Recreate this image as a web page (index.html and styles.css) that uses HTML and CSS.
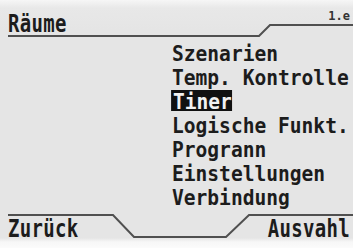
FILE: index.html
```html
<!DOCTYPE html>
<html lang="de">
<head>
<meta charset="utf-8">
<title>Räume</title>
<link rel="stylesheet" href="styles.css">
</head>
<body>
<div class="screen">
  <header class="head">
    <svg class="rule" width="353" height="38" viewBox="0 0 353 38"><path d="M8 36 H259 L270 25 H353" fill="none" stroke="#505050" stroke-width="2"/></svg>
    <div class="big title">Räume</div>
    <div class="ver">1.e</div>
  </header>
  <ul class="menu">
    <li>Szenarien</li>
    <li>Temp. Kontrolle</li>
    <li><span class="sel">Tiner</span></li>
    <li>Logische Funkt.</li>
    <li>Progrann</li>
    <li>Einstellungen</li>
    <li>Verbindung</li>
  </ul>
  <footer class="foot">
    <svg class="rule" width="353" height="35" viewBox="0 0 353 35"><path d="M8 2 H113 L134 24 H226 L249 2 H353" fill="none" stroke="#505050" stroke-width="2"/></svg>
    <div class="big key">Zurück</div>
    <div class="big key right">Ausvahl</div>
  </footer>
</div>
</body>
</html>
```

FILE: styles.css
```css
html, body {
  margin: 0;
  padding: 0;
}
body {
  width: 353px;
  height: 248px;
  overflow: hidden;
  background: linear-gradient(#f6f6f6 0, #e8e8e8 8px, #e5e5e5 30px, #e5e5e5 238px, #f7f7f7 242px, #fbfbfb 248px);
  font-family: "DejaVu Sans Mono", "Liberation Mono", monospace;
  font-weight: bold;
  color: #1c1c1c;
}
.screen {
  height: 248px;
  display: flex;
  flex-direction: column;
}
.head, .foot {
  display: grid;
}
.head { height: 38px; }
.foot { height: 35px; margin-top: auto; }
.head > *, .foot > * {
  grid-area: 1 / 1;
}
.rule { display: block; }
.big {
  font-size: 19px;
  line-height: 19px;
  height: 19px;
  transform: scaleY(1.33);
  transform-origin: 0 16px;
  letter-spacing: 0.3px;
}
.title {
  margin: 16px 0 0 8px;
  align-self: start;
  justify-self: start;
}
.ver {
  justify-self: end;
  align-self: start;
  font-size: 12px;
  line-height: 12px;
  margin: 10px 3px 0 0;
  color: #333;
}
.key {
  margin: 8px 0 0 8px;
  align-self: start;
  justify-self: start;
}
.key.right {
  justify-self: end;
  margin: 8px 3px 0 0;
  transform-origin: 100% 16px;
}
.menu {
  list-style: none;
  margin: 0;
  padding: 3.5px 0 0 172px;
  font-size: 21.5px;
  line-height: 24px;
}
.menu li {
  white-space: nowrap;
  transform: scaleX(0.91);
  transform-origin: 0 50%;
}
.sel {
  display: inline-block;
  vertical-align: baseline;
  line-height: 23px;
  height: 21px;
  padding-left: 2px;
  margin-left: -1px;
  background: #111;
  color: #f2f2f2;
}
```
